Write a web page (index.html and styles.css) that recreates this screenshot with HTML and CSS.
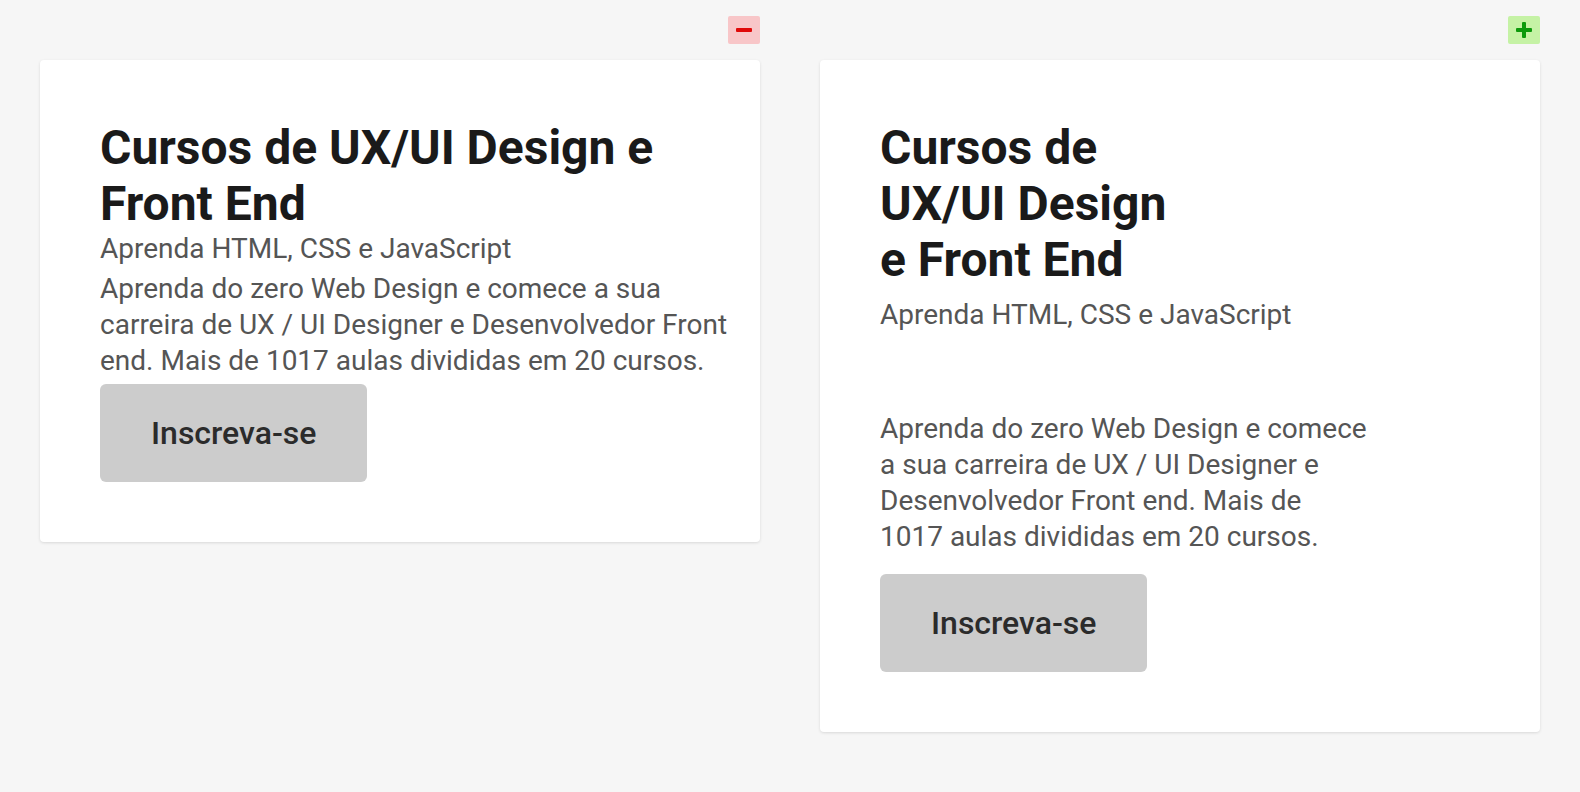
FILE: index.html
```html
<!DOCTYPE html>
<html lang="pt-BR">
<head>
<meta charset="utf-8">
<title>Cursos de UX/UI Design e Front End</title>
<link rel="stylesheet" href="styles.css">
</head>
<body>
<main class="page">
  <section class="col">
    <span class="badge badge-minus" aria-label="Antes">
      <svg width="16" height="16" viewBox="0 0 16 16"><rect x="0" y="6" width="16" height="4" rx="1" fill="#e00a0a"/></svg>
    </span>
    <article class="card card-before">
      <h1 class="title">Cursos de UX/UI Design e Front End</h1>
      <p class="sub">Aprenda HTML, CSS e JavaScript</p>
      <p class="text">Aprenda do zero Web Design e comece a sua carreira de UX / UI Designer e Desenvolvedor Front end. Mais de 1017 aulas divididas em 20 cursos.</p>
      <a class="btn" href="#">Inscreva-se</a>
    </article>
  </section>
  <section class="col">
    <span class="badge badge-plus" aria-label="Depois">
      <svg width="16" height="16" viewBox="0 0 16 16"><rect x="0" y="6" width="16" height="4" rx="1" fill="#0c9a0c"/><rect x="6" y="0" width="4" height="16" rx="1" fill="#0c9a0c"/></svg>
    </span>
    <article class="card card-after">
      <h1 class="title">Cursos de UX/UI Design e Front End</h1>
      <p class="sub">Aprenda HTML, CSS e JavaScript</p>
      <p class="text">Aprenda do zero Web Design e comece a sua carreira de UX / UI Designer e Desenvolvedor Front end. Mais de 1017 aulas divididas em 20 cursos.</p>
      <a class="btn" href="#">Inscreva-se</a>
    </article>
  </section>
</main>
</body>
</html>
```

FILE: styles.css
```css
* { box-sizing: border-box; }

html, body {
  margin: 0;
  background: #f6f6f6;
  font-family: Roboto, "Liberation Sans", sans-serif;
}

.page {
  display: grid;
  grid-template-columns: 720px 720px;
  column-gap: 60px;
  padding: 16px 40px;
  align-items: start;
}

.col {
  display: flex;
  flex-direction: column;
  gap: 16px;
}

.badge {
  align-self: flex-end;
  width: 32px;
  height: 28px;
  display: flex;
  align-items: center;
  justify-content: center;
  border-radius: 2px;
}

.badge-minus { background: #f8c6c8; }
.badge-plus { background: #c5f2a5; }

.card {
  background: #fff;
  border-radius: 4px;
  box-shadow: 0 1px 3px rgba(0, 0, 0, 0.12);
  padding: 60px 20px 60px 60px;
  display: flex;
  flex-direction: column;
  align-items: flex-start;
}

.title {
  margin: 0;
  font-size: 48px;
  line-height: 56px;
  font-weight: 700;
  color: #1a1a1a;
}

.sub, .text {
  margin: 0;
  font-size: 28px;
  color: #555;
  line-height: 36px;
}

.btn {
  display: inline-block;
  background: #cccccc;
  color: #2b2b2b;
  text-decoration: none;
  font-size: 32px;
  font-weight: 500;
  line-height: 42px;
  padding: 28px 51px;
  border-radius: 6px;
}

/* Before */
.card-before .sub { line-height: 28px; margin-top: 3px; }
.card-before .text { margin-top: 8px; }
.card-before .btn { margin-top: 5px; }

/* After */
.card-after .title { max-width: 320px; }
.card-after .sub { margin-top: 9px; }
.card-after .text { margin-top: 78px; max-width: 487px; }
.card-after .btn { margin-top: 19px; }
```
